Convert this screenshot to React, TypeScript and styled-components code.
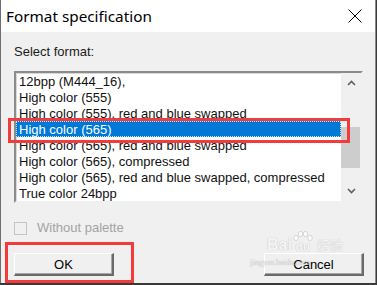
import React from "react";
import styled, { createGlobalStyle } from "styled-components";

const Global = createGlobalStyle`
  html, body { margin: 0; padding: 0; background: #3a3a3a; }
  body { width: 377px; height: 285px; overflow: hidden; }
`;

const Window = styled.div`
  position: relative;
  width: 374px;
  height: 283px;
  background: #f0f0f0;
  border-left: 1px solid #6e6e6e;
  border-right: 1px solid #8a8a8a;
  display: flex;
  flex-direction: column;
  font-family: "Liberation Sans", Arial, sans-serif;
  font-size: 13px;
  color: #000;
`;

const TitleBar = styled.div`
  height: 32px;
  background: #fff;
  display: flex;
  align-items: center;
  justify-content: space-between;
  padding: 0 13px 0 5px;
  flex-shrink: 0;
`;

const Title = styled.span`
  font-family: "Noto Sans", "Open Sans", sans-serif;
  font-size: 15.3px;
  color: #000;
  margin-top: -1px;
`;

const CloseIcon = styled.svg`
  width: 14px;
  height: 14px;
  display: block;
`;

const Body = styled.div`
  flex: 1;
  display: flex;
  flex-direction: column;
  padding: 12px 12px 0 13px;
`;

const Label = styled.div`
  line-height: 15px;
  height: 15px;
  color: #1a1a1a;
`;

const ListBox = styled.div`
  margin-top: 12px;
  width: 345px;
  height: 128px;
  border: 2px solid;
  border-color: #8c8c8c #f0f0f0 #f0f0f0 #8c8c8c;
  box-shadow: inset 1px 1px 0 #d8d8d8;
  background: #fff;
  display: flex;
  overflow: hidden;
`;

const Items = styled.div`
  flex: 1;
  display: flex;
  flex-direction: column;
`;

const Item = styled.div<{ $selected?: boolean }>`
  height: 16px;
  line-height: 15px;
  padding-left: 2px;
  white-space: nowrap;
  box-sizing: border-box;
  border: 1px ${(p) => (p.$selected ? "dotted #cfe4f7" : "solid transparent")};
  background: ${(p) => (p.$selected ? "#0078d7" : "transparent")};
  color: ${(p) => (p.$selected ? "#fff" : "#111")};
`;

const ScrollBar = styled.div`
  width: 20px;
  background: #f0f0f0;
  display: flex;
  flex-direction: column;
  align-items: center;
`;

const Arrow = styled.div`
  height: 20px;
  width: 100%;
  display: flex;
  align-items: center;
  justify-content: center;
`;

const Track = styled.div`
  flex: 1;
  width: 100%;
  display: flex;
  flex-direction: column;
  padding-top: 34px;
  box-sizing: border-box;
`;

const Thumb = styled.div`
  height: 41px;
  width: 19px;
  background: #cdcdcd;
`;

const CheckRow = styled.div`
  margin-top: 18px;
  display: flex;
  align-items: center;
  gap: 10px;
  height: 14px;
`;

const CheckBox = styled.div`
  width: 11px;
  height: 11px;
  border: 1px solid #c4c4c4;
  background: #f0f0f0;
`;

const CheckLabel = styled.span`
  color: #a3a3a3;
  line-height: 14px;
`;

const ButtonRow = styled.div`
  margin-top: 18px;
  display: flex;
  justify-content: space-between;
  width: 350px;
`;

const Button = styled.div`
  width: 97px;
  height: 20px;
  box-sizing: content-box;
  border-style: solid;
  border-width: 1px 2px 2px 1px;
  border-color: #fff #6a6a6a #6a6a6a #fff;
  box-shadow: inset -1px -1px 0 #a8a8a8;
  background: #f0f0f0;
  display: flex;
  align-items: center;
  justify-content: center;
  color: #000;
`;

const Annotation = styled.div<{ $x: number; $y: number; $w: number; $h: number }>`
  position: absolute;
  left: ${(p) => p.$x}px;
  top: ${(p) => p.$y}px;
  width: ${(p) => p.$w}px;
  height: ${(p) => p.$h}px;
  box-sizing: border-box;
  border: 3px solid #f23b3b;
  pointer-events: none;
`;

const Watermark = styled.div`
  position: absolute;
  left: 258px;
  top: 231px;
  width: 92px;
  display: flex;
  flex-direction: column;
  align-items: center;
  pointer-events: none;
  color: rgba(255, 255, 255, 0.9);
  text-shadow: 0 0 1px rgba(110, 110, 110, 0.55);
`;

const WmTop = styled.div`
  display: flex;
  align-items: flex-end;
  font-family: "Liberation Sans", Arial, sans-serif;
  font-weight: bold;
  font-size: 16px;
  line-height: 16px;
`;

const Paw = styled.div`
  position: relative;
  width: 22px;
  height: 22px;
  display: flex;
  align-items: flex-end;
  justify-content: center;
`;

const PawToes = styled.svg`
  position: absolute;
  left: 0;
  top: 0;
`;

const PawText = styled.span`
  position: relative;
  font-size: 12px;
  line-height: 12px;
  font-weight: bold;
  color: rgba(255, 255, 255, 0.9);
`;

const WmCn = styled.span`
  font-family: "Noto Sans CJK SC", sans-serif;
  font-size: 13px;
  font-weight: normal;
  margin-left: 3px;
`;

const WmUrl = styled.div`
  font-family: "Liberation Serif", serif;
  font-size: 8px;
  line-height: 9px;
  margin-top: 5px;
  margin-left: -50px;
  color: rgba(255, 255, 255, 0.55);
`;

const Chevron = ({ up }: { up?: boolean }) => (
  <svg width="9" height="6" viewBox="0 0 9 6">
    <path
      d={up ? "M1 5 L4.5 1.5 L8 5" : "M1 1 L4.5 4.5 L8 1"}
      fill="none"
      stroke="#606060"
      strokeWidth="1.6"
    />
  </svg>
);

const items = [
  "12bpp (M444_16),",
  "High color (555)",
  "High color (555), red and blue swapped",
  "High color (565)",
  "High color (565), red and blue swapped",
  "High color (565), compressed",
  "High color (565), red and blue swapped, compressed",
  "True color 24bpp",
];

export default function App() {
  return (
    <>
      <Global />
      <Window>
        <TitleBar>
          <Title>Format specification</Title>
          <CloseIcon viewBox="0 0 14 14">
            <path d="M0.5 0.5 L13.5 13.5 M13.5 0.5 L0.5 13.5" stroke="#000" strokeWidth="1" />
          </CloseIcon>
        </TitleBar>
        <Body>
          <Label>Select format:</Label>
          <ListBox>
            <Items>
              {items.map((t, i) => (
                <Item key={t} $selected={i === 3}>
                  {t}
                </Item>
              ))}
            </Items>
            <ScrollBar>
              <Arrow>
                <Chevron up />
              </Arrow>
              <Track>
                <Thumb />
              </Track>
              <Arrow>
                <Chevron />
              </Arrow>
            </ScrollBar>
          </ListBox>
          <CheckRow>
            <CheckBox />
            <CheckLabel>Without palette</CheckLabel>
          </CheckRow>
          <ButtonRow>
            <Button>OK</Button>
            <Button>Cancel</Button>
          </ButtonRow>
        </Body>
        <Annotation $x={7} $y={118} $w={342} $h={25} />
        <Annotation $x={4} $y={242} $w={129} $h={41} />
        <Watermark>
          <WmTop>
            <span>Bai</span>
            <Paw>
              <PawToes width="22" height="22" viewBox="0 0 22 22">
                <g fill="rgba(255,255,255,0.85)" stroke="rgba(140,140,140,0.5)" strokeWidth="0.6">
                  <ellipse cx="4" cy="7" rx="2.2" ry="2.6" />
                  <ellipse cx="8.5" cy="3" rx="2.2" ry="2.6" />
                  <ellipse cx="13.5" cy="3" rx="2.2" ry="2.6" />
                  <ellipse cx="18" cy="7" rx="2.2" ry="2.6" />
                </g>
              </PawToes>
              <PawText>du</PawText>
            </Paw>
            <WmCn>经验</WmCn>
          </WmTop>
          <WmUrl>jingyan.baidu.com</WmUrl>
        </Watermark>
      </Window>
    </>
  );
}
